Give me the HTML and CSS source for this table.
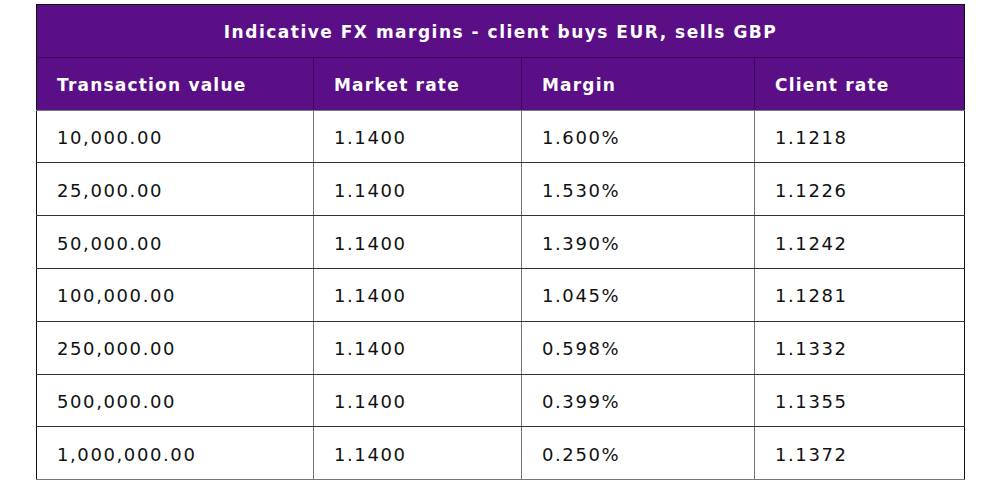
FILE: index.html
```html
<!DOCTYPE html>
<html>
<head>
<meta charset="utf-8">
<link rel="stylesheet" href="styles.css">
</head>
<body>
<div class="wrap">
<table class="fx">
  <colgroup>
    <col class="c1"><col class="c2"><col class="c3"><col class="c4">
  </colgroup>
  <thead>
    <tr class="title"><th colspan="4">Indicative FX margins - client buys EUR, sells GBP</th></tr>
    <tr class="head"><th>Transaction value</th><th>Market rate</th><th>Margin</th><th>Client rate</th></tr>
  </thead>
  <tbody>
    <tr><td>10,000.00</td><td>1.1400</td><td>1.600%</td><td>1.1218</td></tr>
    <tr><td>25,000.00</td><td>1.1400</td><td>1.530%</td><td>1.1226</td></tr>
    <tr><td>50,000.00</td><td>1.1400</td><td>1.390%</td><td>1.1242</td></tr>
    <tr><td>100,000.00</td><td>1.1400</td><td>1.045%</td><td>1.1281</td></tr>
    <tr><td>250,000.00</td><td>1.1400</td><td>0.598%</td><td>1.1332</td></tr>
    <tr><td>500,000.00</td><td>1.1400</td><td>0.399%</td><td>1.1355</td></tr>
    <tr><td>1,000,000.00</td><td>1.1400</td><td>0.250%</td><td>1.1372</td></tr>
  </tbody>
</table>
</div>
</body>
</html>
```
FILE: styles.css
```css
html, body {
  margin: 0;
  padding: 0;
  background: #ffffff;
}
.wrap {
  padding: 4px 0 0 36px;
}
.fx {
  border-collapse: collapse;
  table-layout: fixed;
  width: 928px;
  font-family: "DejaVu Sans", "Liberation Sans", sans-serif;
  font-size: 17px;
  letter-spacing: 1px;
}
.c1 { width: 277px; }
.c2 { width: 208px; }
.c3 { width: 233px; }
.c4 { width: 210px; }
.fx th, .fx td {
  padding: 2px 0 0 20px;
  text-align: left;
  height: 52.8px;
  box-sizing: border-box;
}
.title th {
  background: #5a0f87;
  color: #ffffff;
  text-align: center;
  padding: 2px 0 0 0;
  font-weight: 700;
  letter-spacing: 1.5px;
  border: 1px solid #111111;
  border-bottom: 1px solid #3a0a58;
}
.head th {
  background: #5a0f87;
  color: #ffffff;
  font-weight: 700;
  letter-spacing: 1.2px;
  border: 1px solid #3a0a58;
  border-left-color: #111111;
  border-bottom: 1px solid #7a7a7a;
}
.head th + th {
  border-left-color: #3a0a58;
}
.head th:last-child {
  border-right-color: #111111;
}
.fx td {
  color: #111111;
  font-weight: 400;
  font-size: 18px;
  letter-spacing: 1.6px;
  border: 1px solid #777777;
  border-top-color: #333333;
  border-bottom-color: #333333;
}
.fx td:first-child {
  border-left-color: #111111;
}
.fx td:last-child {
  border-right-color: #111111;
}
tbody tr:last-child td {
  border-bottom-color: #777777;
}
```
